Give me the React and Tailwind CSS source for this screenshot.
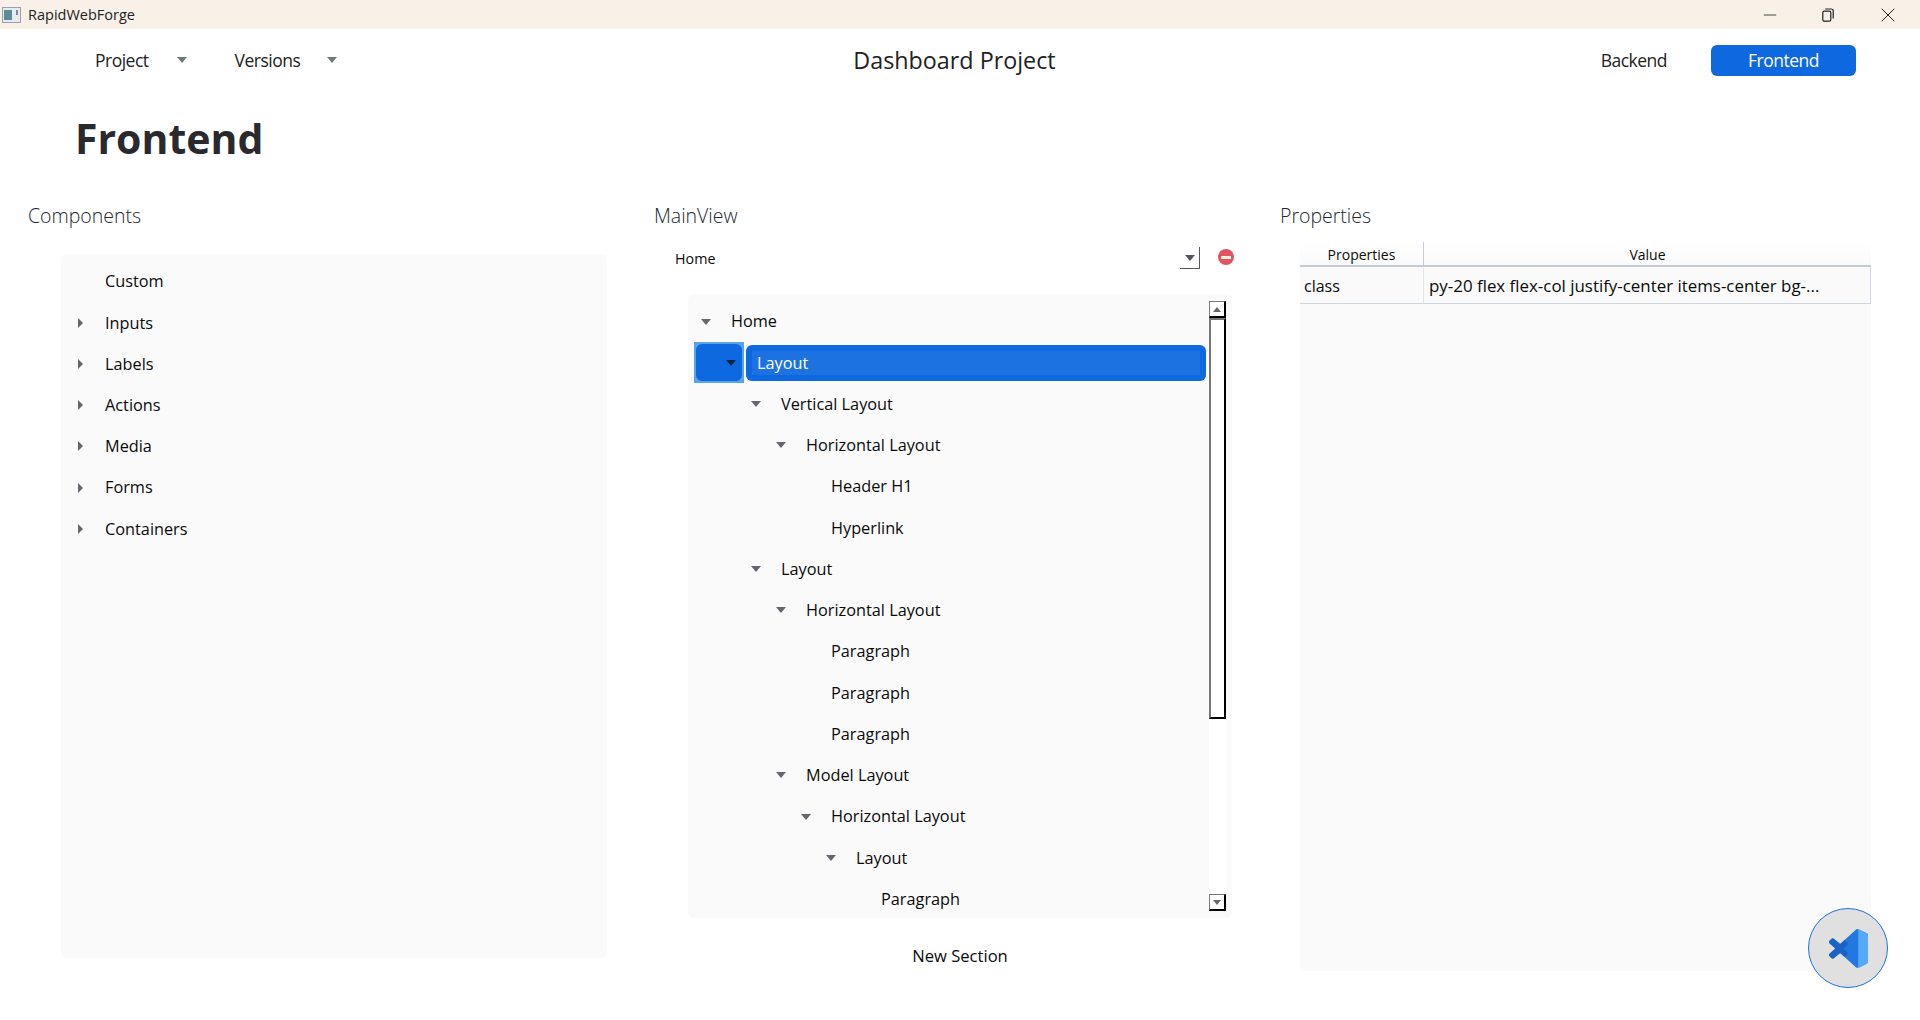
import { X, Minus } from "lucide-react";

const components = [
  { label: "Custom" },
  { label: "Inputs", arrow: true },
  { label: "Labels", arrow: true },
  { label: "Actions", arrow: true },
  { label: "Media", arrow: true },
  { label: "Forms", arrow: true },
  { label: "Containers", arrow: true },
];

const tree = [
  { label: "Home", depth: 0, open: true },
  { label: "Layout", depth: 1, open: true, selected: true },
  { label: "Vertical Layout", depth: 2, open: true },
  { label: "Horizontal Layout", depth: 3, open: true },
  { label: "Header H1", depth: 4 },
  { label: "Hyperlink", depth: 4 },
  { label: "Layout", depth: 2, open: true },
  { label: "Horizontal Layout", depth: 3, open: true },
  { label: "Paragraph", depth: 4 },
  { label: "Paragraph", depth: 4 },
  { label: "Paragraph", depth: 4 },
  { label: "Model Layout", depth: 3, open: true },
  { label: "Horizontal Layout", depth: 4, open: true },
  { label: "Layout", depth: 5, open: true },
  { label: "Paragraph", depth: 6 },
];

const CaretDown = ({ className = "fill-[#66666e]" }) => (
  <svg width="10" height="6" viewBox="0 0 10 6" className={className}>
    <polygon points="0,0 10,0 5,6" />
  </svg>
);

const CaretRight = () => (
  <svg width="5" height="10" viewBox="0 0 5 10" className="fill-[#66666e]">
    <polygon points="0,0 5,5 0,10" />
  </svg>
);

const WindowIcon = () => (
  <svg width="19" height="16" viewBox="0 0 19 16">
    <rect x="0.5" y="0.5" width="18" height="15" fill="#e8eaf0" stroke="#9aa0b0" />
    <rect x="2" y="3" width="8" height="10" fill="#5c8c94" />
    <rect x="14" y="3" width="2" height="5" fill="#7a8aa0" />
  </svg>
);

const RestoreIcon = () => (
  <svg width="12" height="14" viewBox="0 0 12 14" fill="none" stroke="#222" strokeWidth="1.2">
    <rect x="0.8" y="3.2" width="8" height="10" rx="1.5" />
    <path d="M3.2 1h6a2 2 0 0 1 2 2v7.5" />
  </svg>
);

const VsCodeLogo = () => (
  <svg width="39" height="39" viewBox="0 0 100 100">
    <path
      fill="#2378e0"
      d="M70.9 99.3c1.6.6 3.4.6 5-.2l20.6-9.9c2.1-1 3.5-3.2 3.5-5.6V16.4c0-2.4-1.4-4.6-3.5-5.6L75.9.9c-2.1-1-4.5-.8-6.4.5-.3.2-.5.4-.7.7L29.4 38 12.2 25c-1.6-1.2-3.8-1.1-5.3.2l-5.5 5c-1.8 1.7-1.8 4.5 0 6.2L16.2 50 1.4 63.6c-1.8 1.7-1.8 4.5 0 6.1l5.5 5c1.5 1.4 3.7 1.5 5.3.3l17.2-13 39.4 35.9c.6.6 1.3 1.1 2.1 1.4ZM75 27.3 45.1 50 75 72.7V27.3Z"
    />
    <path
      fill="#1a63c4"
      d="M12.2 25c-1.6-1.2-3.8-1.1-5.3.2l-5.5 5c-1.8 1.7-1.8 4.5 0 6.2L40 72l10-9.5ZM1.4 63.6c-1.8 1.7-1.8 4.5 0 6.1l5.5 5c1.5 1.4 3.7 1.5 5.3.3L50 38 40 28Z"
    />
    <path
      fill="#56a9f6"
      d="M68.8 2.1c3-3 6-2 7.1-1.2l20.6 9.9c2.1 1 3.5 3.2 3.5 5.6v67.2c0 2.4-1.4 4.6-3.5 5.6l-20.6 9.9c-2 1-5 1-7.1-1.2 3.5 2.8 6.2 0 6.2-3.5V5.6c0-3.5-2.7-6.3-6.2-3.5Z"
    />
  </svg>
);

const SectionTitle = ({ children }) => (
  <h2 className="h-[53px] flex items-center text-[19.5px] leading-none text-[#22282e] font-light">{children}</h2>
);

const TreeRow = ({ item }) => {
  if (item.selected) {
    return (
      <div className="h-[41.25px] flex items-center pl-[6px] pr-[26px] gap-[2px]">
        <div className="w-[50px] h-[41px] border-2 border-dotted border-[#56a5ec] bg-[#56a5ec] shrink-0">
          <div className="w-full h-full rounded-[6px] bg-[#0e68df] flex items-center justify-end pr-[6px]">
            <CaretDown className="fill-[#14224a]" />
          </div>
        </div>
        <div className="flex-1 h-[36px] rounded-[6px] bg-[#0e68df] p-[6px]">
          <div className="h-full bg-[#1c72e0] flex items-center pl-[5px] text-white">{item.label}</div>
        </div>
      </div>
    );
  }
  return (
    <div className="h-[41.25px] flex items-center relative" style={{ paddingLeft: 43 + item.depth * 25 }}>
      {item.open && (
        <span className="absolute flex" style={{ left: 13 + item.depth * 25 }}>
          <CaretDown />
        </span>
      )}
      {item.label}
    </div>
  );
};

const ScrollButton = ({ up }) => (
  <div className="h-[17px] w-[17px] bg-white border-l border-t border-[#777] border-r-2 border-b-2 border-r-black border-b-black flex items-center justify-center">
    <svg width="8" height="5" viewBox="0 0 8 5" className="fill-[#66666e]">
      <polygon points={up ? "0,5 8,5 4,0" : "0,0 8,0 4,5"} />
    </svg>
  </div>
);

const App = () => {
  return (
    <div
      className="relative h-screen w-full overflow-hidden bg-white text-[#0a0a0a] flex flex-col text-[16.3px]"
      style={{ fontFamily: '"Open Sans", "Noto Sans", sans-serif' }}
    >
      {/* title bar */}
      <div className="h-[29px] shrink-0 bg-[#f9f1e8] flex items-center justify-between pl-[2px]">
        <div className="flex items-center gap-[7px] text-[14.5px] text-[#222]">
          <WindowIcon />
          <span>RapidWebForge</span>
        </div>
        <div className="flex items-center">
          <div className="w-[58px] flex justify-center pl-[2px]"><Minus size={20} strokeWidth={1} color="#222" /></div>
          <div className="w-[58px] flex justify-center pl-[2px]"><RestoreIcon /></div>
          <div className="w-[64px] flex justify-center"><X size={24} strokeWidth={1} color="#222" /></div>
        </div>
      </div>

      {/* nav */}
      <div className="h-[62px] shrink-0 grid grid-cols-[1fr_auto_1fr] items-center">
        <div className="flex items-center pl-[95px] text-[17.5px] tracking-[-0.5px] text-[#222]">
          <span>Project</span>
          <span className="ml-[28px] flex"><CaretDown className="fill-[#6b7c7c]" /></span>
          <span className="ml-[48px]">Versions</span>
          <span className="ml-[27px] flex"><CaretDown className="fill-[#6b7c7c]" /></span>
        </div>
        <div className="text-[23.3px] text-[#222] mr-[11px]">Dashboard Project</div>
        <div className="flex items-center justify-end pr-[64px] text-[17.5px] tracking-[-0.5px]">
          <span className="text-[#222] mr-[44px]">Backend</span>
          <button className="w-[145px] h-[31px] rounded-[6px] bg-[#0e68df] text-white">Frontend</button>
        </div>
      </div>

      {/* heading */}
      <h1 className="h-[98px] pb-[3px] shrink-0 flex items-center pl-[75px] text-[41px] leading-none font-bold text-[#2a2a2e]">Frontend</h1>

      {/* columns */}
      <div className="flex-1 grid grid-cols-[626px_626px_1fr] pl-[28px]">
        <div>
          <SectionTitle>Components</SectionTitle>
          <div className="mt-[12px] ml-[33px] w-[546px] h-[704px] rounded-[6px] bg-[#fafafa] pt-[7px]">
            {components.map((c) => (
              <div key={c.label} className="h-[41.2px] flex items-center relative pl-[44px]">
                {c.arrow && (
                  <span className="absolute left-[17px] flex"><CaretRight /></span>
                )}
                {c.label}
              </div>
            ))}
          </div>
        </div>

        <div>
          <SectionTitle>MainView</SectionTitle>
          <div className="mt-[5px] h-[22px] flex items-center pl-[21px] text-[14.3px]">
            <span className="w-[505px] pt-[2px]">Home</span>
            <div className="w-[20px] h-[22px] border-r border-b border-[#555570] flex items-center justify-center">
              <CaretDown className="fill-[#55555f]" />
            </div>
            <div className="ml-[18px] mb-[2px] w-[16px] h-[16px] rounded-full bg-[#e05561] flex items-center justify-center">
              <div className="w-[10px] h-[3px] bg-[#f8efe0]" />
            </div>
          </div>
          <div className="relative mt-[25px] ml-[34px] w-[544px] h-[624px] rounded-[6px] bg-[#fafafa] overflow-hidden pt-[7px]">
            {tree.map((item, i) => (
              <TreeRow key={i} item={item} />
            ))}
            <div className="absolute top-[7px] bottom-[7px] right-[6px] w-[17px] bg-white flex flex-col">
              <ScrollButton up />
              <div className="h-[401px] bg-white border-l-2 border-t-2 border-[#777] border-r-2 border-b-2 border-r-black border-b-black" />
              <div className="flex-1" />
              <ScrollButton />
            </div>
          </div>
          <div className="h-[76px] pr-[14px] flex items-center justify-center text-[16.6px]">New Section</div>
        </div>

        <div>
          <SectionTitle>Properties</SectionTitle>
          <div className="ml-[20px] w-[571px] h-[729px] rounded-[6px] bg-[#fafafa]">
            <div className="h-[25px] grid grid-cols-[124px_1fr] bg-gradient-to-b from-white to-[#fafafa] border-b-2 border-[#c4ccd4] text-[14px] text-center">
              <div className="border-r border-[#c4ccd4] flex items-center justify-center pt-[1px]">Properties</div>
              <div className="flex items-center justify-center pt-[1px]">Value</div>
            </div>
            <div className="h-[37px] pt-[1px] grid grid-cols-[124px_1fr] border-b border-r border-[#cdd5de] text-[16px]">
              <div className="border-r border-[#e2e6ea] flex items-center pl-[4px]">class</div>
              <div className="flex items-center pl-[5px] text-[16.9px]">py-20 flex flex-col justify-center items-center bg-...</div>
            </div>
          </div>
        </div>
      </div>

      {/* vscode shortcut */}
      <button className="absolute left-[1808px] top-[908px] w-[80px] h-[80px] rounded-full bg-[#e0e0e0] border-[1.5px] border-[#1a73e0] flex items-center justify-center">
        <VsCodeLogo />
      </button>
    </div>
  );
};

export default App;
